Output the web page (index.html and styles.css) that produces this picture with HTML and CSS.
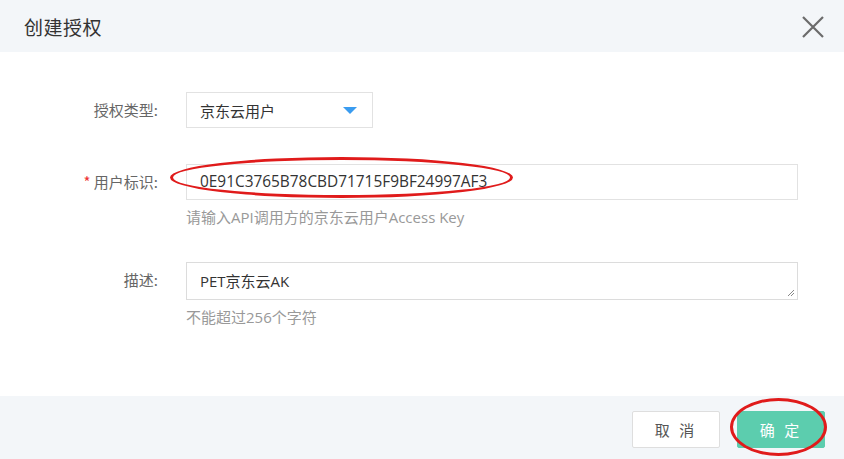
FILE: index.html
```html
<!DOCTYPE html>
<html lang="zh-CN">
<head>
<meta charset="utf-8">
<title>创建授权</title>
<link rel="stylesheet" href="styles.css">
</head>
<body>
<div class="dialog">
  <header class="dlg-head">
    <h1 class="dlg-title">创建授权</h1>
    <button class="dlg-close" aria-label="关闭">
      <svg width="22" height="22" viewBox="0 0 22 22"><path d="M1 1 L21 21 M21 1 L1 21" stroke="#6b6b6b" stroke-width="2.2" fill="none"/></svg>
    </button>
  </header>
  <main class="dlg-body">
    <div class="row row-type">
      <label class="lbl">授权类型:</label>
      <div class="field">
        <div class="select">
          <span>京东云用户</span>
          <span class="caret"></span>
        </div>
      </div>
    </div>
    <div class="row row-user">
      <label class="lbl"><span class="req">*</span> 用户标识:</label>
      <div class="field">
        <div class="input">0E91C3765B78CBD71715F9BF24997AF3</div>
        <div class="help">请输入API调用方的京东云用户Access Key</div>
      </div>
      <div class="mark mark-input"></div>
    </div>
    <div class="row row-desc">
      <label class="lbl">描述:</label>
      <div class="field">
        <div class="textarea">PET京东云AK
          <svg class="grip" width="8" height="8" viewBox="0 0 8 8"><path d="M7 1 L1 7 M7 4 L4 7" stroke="#888" stroke-width="1" fill="none"/></svg>
        </div>
        <div class="help">不能超过256个字符</div>
      </div>
    </div>
  </main>
  <footer class="dlg-foot">
    <button class="btn btn-cancel">取 消</button>
    <button class="btn btn-ok">确 定</button>
    <div class="mark mark-ok"></div>
  </footer>
</div>
</body>
</html>
```

FILE: styles.css
```css
* { box-sizing: border-box; }
html, body { margin: 0; padding: 0; }
body {
  width: 844px;
  height: 459px;
  overflow: hidden;
  font-family: "Open Sans", "Noto Sans CJK SC", sans-serif;
  background: #fff;
  color: #333;
}
.dialog {
  display: flex;
  flex-direction: column;
  height: 459px;
}
.dlg-head {
  height: 52px;
  background: #f3f6f9;
  display: flex;
  align-items: center;
  justify-content: space-between;
  padding: 0 20px 0 24px;
}
.dlg-title {
  margin: 0;
  font-size: 19px;
  font-weight: normal;
  color: #333;
  font-family: "Noto Sans CJK SC", sans-serif;
  letter-spacing: 0.5px;
}
.dlg-close {
  border: 0;
  background: none;
  padding: 0;
  width: 22px;
  height: 22px;
  margin-top: 2px;
  display: flex;
}
.dlg-body {
  flex: 1;
  padding-top: 40px;
  background: #fff;
}
.row {
  display: flex;
  position: relative;
  font-size: 15px;
}
.row-type { margin-bottom: 36px; }
.row-user { margin-bottom: 35px; }
.lbl {
  width: 160px;
  flex: none;
  text-align: right;
  color: #666;
  line-height: 36px;
  font-family: "Noto Sans CJK SC", sans-serif;
  padding-right: 2px;
}
.req { color: #e33; }
.field {
  margin-left: 26px;
  flex: none;
}
.select {
  width: 187px;
  height: 36px;
  border: 1px solid #e2e2e2;
  display: flex;
  align-items: center;
  justify-content: space-between;
  padding: 0 15px 0 13px;
  color: #333;
  font-family: "Noto Sans CJK SC", sans-serif;
}
.caret {
  width: 0;
  height: 0;
  border-left: 7px solid transparent;
  border-right: 7px solid transparent;
  border-top: 7px solid #3a9cf0;
  margin-top: 1px;
}
.input {
  width: 612px;
  height: 36px;
  border: 1px solid #e2e2e2;
  line-height: 34px;
  padding-left: 13px;
  color: #333;
  font-size: 15.4px;
}
.textarea {
  position: relative;
  width: 612px;
  height: 38px;
  border: 1px solid #dcdcdc;
  line-height: 36px;
  padding-left: 13px;
  color: #333;
}
.grip {
  position: absolute;
  right: 2px;
  bottom: 2px;
}
.help {
  color: #999;
  line-height: 20px;
  margin-top: 7px;
  font-size: 15px;
}
.dlg-foot {
  position: relative;
  height: 63px;
  background: #f3f6f9;
  display: flex;
  justify-content: flex-end;
  align-items: flex-start;
  padding: 15px 19px 0 0;
  gap: 17px;
}
.btn {
  width: 88px;
  height: 37px;
  font-size: 15px;
  font-family: "Noto Sans CJK SC", sans-serif;
  border-radius: 2px;
  letter-spacing: 3px;
  cursor: pointer;
}
.btn-cancel {
  background: #fff;
  border: 1px solid #dedede;
  color: #555;
}
.btn-ok {
  background: #5ccdae;
  border: 1px solid #5ccdae;
  color: #fff;
}
.mark {
  position: absolute;
  border: 3px solid #e01b1b;
  border-radius: 50%;
  pointer-events: none;
}
.mark-input {
  left: 170px;
  top: -7px;
  width: 343px;
  height: 41px;
}
.mark-ok {
  left: 730px;
  top: 2px;
  width: 97px;
  height: 58px;
}
```
